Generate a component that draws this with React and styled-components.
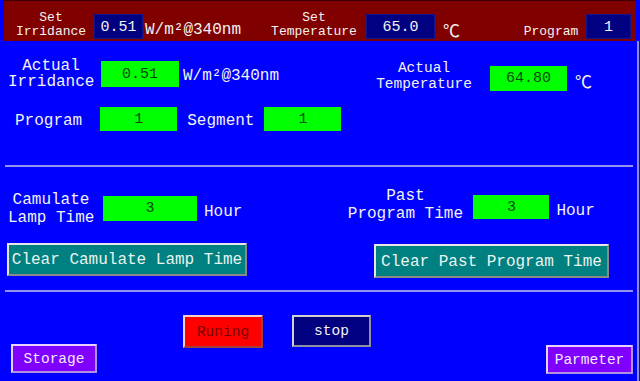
import React from "react";
import styled, { createGlobalStyle } from "styled-components";

const Global = createGlobalStyle`
  html, body { margin: 0; padding: 0; background: #0000ff; }
  * { box-sizing: border-box; }
`;

const FONT = `"Liberation Mono", "DejaVu Sans Mono", "Noto Sans CJK SC", monospace`;

const Screen = styled.div`
  width: 640px;
  height: 381px;
  background: #0000ff;
  overflow: hidden;
  font-family: ${FONT};
  color: #f2f2f2;
  display: flex;
  flex-direction: column;
`;

const TopBar = styled.div`
  margin-left: 4px;
  width: 632px;
  height: 41px;
  flex: none;
  background: #800000;
  border-top: 1px solid #3a0000;
  display: flex;
  align-items: flex-end;
  padding-bottom: 2px;
`;

const Main = styled.div`
  flex: 1;
  width: 639px;
  border-right: 2px solid #8c8ce6;
  display: flex;
  flex-direction: column;
`;

const SetLabel = styled.div`
  margin-left: ${(p) => p.$ml}px;
  width: ${(p) => p.$w}px;
  font-size: 13px;
  line-height: 14px;
  text-align: center;
  white-space: nowrap;
`;

const SetValue = styled.div`
  margin-left: ${(p) => p.$ml}px;
  width: ${(p) => p.$w}px;
  height: 25px;
  background: #000080;
  border: 1px solid #14148c;
  color: #f4f4f4;
  font-size: 15px;
  line-height: 24px;
  padding-top: 1px;
  text-align: center;
`;

const TopUnit = styled.div`
  margin-left: ${(p) => p.$ml}px;
  margin-bottom: -3px;
  font-size: 16px;
  line-height: 24px;
  white-space: nowrap;
`;

const Celsius = styled.div`
  margin-left: ${(p) => p.$ml}px;
  margin-top: ${(p) => p.$mt || 0}px;
  margin-bottom: ${(p) => p.$mb || 0}px;
  font-family: "Noto Sans CJK SC", sans-serif;
  font-size: 17px;
  line-height: ${(p) => p.$lh || 25}px;
  font-weight: 400;
`;

const Row = styled.div`
  display: flex;
  align-items: flex-start;
  margin-top: ${(p) => p.$mt}px;
  flex: none;
`;

const Label = styled.div`
  margin-left: ${(p) => p.$ml}px;
  margin-top: ${(p) => p.$mt || 0}px;
  width: ${(p) => (p.$w ? `${p.$w}px` : "auto")};
  height: ${(p) => (p.$h ? `${p.$h}px` : "auto")};
  overflow: hidden;
  font-size: ${(p) => p.$fs || 16}px;
  line-height: ${(p) => p.$lh}px;
  text-align: center;
  white-space: nowrap;
`;

const GreenBox = styled.div`
  margin-left: ${(p) => p.$ml}px;
  margin-top: ${(p) => p.$mt || 0}px;
  width: ${(p) => p.$w}px;
  height: ${(p) => p.$h}px;
  background: #00ff00;
  color: #0a4a0a;
  font-size: 15px;
  line-height: ${(p) => p.$h - 1}px;
  padding-top: 1px;
  text-align: center;
`;

const Separator = styled.div`
  margin-top: ${(p) => p.$mt}px;
  margin-left: 5px;
  width: 628px;
  height: 2px;
  background: #9494f0;
  flex: none;
`;

const ClearButton = styled.div`
  margin-left: ${(p) => p.$ml}px;
  margin-top: ${(p) => p.$mt || 0}px;
  width: ${(p) => p.$w}px;
  height: ${(p) => p.$h}px;
  background: #008080;
  border: 2px solid;
  border-color: #e6e6e6 #8a8a8a #8a8a8a #e6e6e6;
  color: #eaf4f0;
  font-size: 16px;
  padding-top: 2px;
  line-height: ${(p) => p.$h - 6}px;
  text-align: center;
  white-space: nowrap;
`;

const ActionButton = styled.div`
  margin-left: ${(p) => p.$ml}px;
  margin-top: ${(p) => p.$mt}px;
  width: ${(p) => p.$w}px;
  height: ${(p) => p.$h}px;
  background: ${(p) => p.$bg};
  color: ${(p) => p.$fg};
  border: 2px solid;
  border-color: ${(p) => p.$hi} ${(p) => p.$lo} ${(p) => p.$lo} ${(p) => p.$hi};
  font-size: 14.5px;
  padding-top: 1px;
  line-height: ${(p) => p.$h - 5}px;
  text-align: center;
  white-space: nowrap;
`;

export default function App() {
  return (
    <>
      <Global />
      <Screen>
        <TopBar>
          <SetLabel $ml={5} $w={84}>
            Set
            <br />
            Irridance
          </SetLabel>
          <SetValue $ml={1} $w={49}>0.51</SetValue>
          <TopUnit $ml={2}>W/m²@340nm</TopUnit>
          <SetLabel $ml={23} $w={100}>
            Set
            <br />
            Temperature
          </SetLabel>
          <SetValue $ml={2} $w={69}>65.0</SetValue>
          <Celsius $ml={8} $lh={24} $mb={-3}>℃</Celsius>
          <SetLabel $ml={61} $w={60}>Program</SetLabel>
          <SetValue $ml={5} $w={45}>1</SetValue>
        </TopBar>
        <Main>
          <Row $mt={15}>
            <Label $ml={8} $w={86} $h={32} $mt={2} $lh={16}>
              Actual
              <br />
              Irridance
            </Label>
            <GreenBox $ml={7} $w={78} $h={26} $mt={5}>0.51</GreenBox>
            <Label $ml={4} $mt={7} $lh={26}>W/m²@340nm</Label>
            <Label $ml={90} $w={110} $mt={4} $lh={16} $fs={14.5}>
              Actual
              <br />
              Temperature
            </Label>
            <GreenBox $ml={11} $w={77} $h={25} $mt={10}>64.80</GreenBox>
            <Celsius $ml={8} $mt={12}>℃</Celsius>
          </Row>
          <Row $mt={13}>
            <Label $ml={15} $mt={3} $lh={24}>Program</Label>
            <GreenBox $ml={18} $w={77} $h={24} $mt={1}>1</GreenBox>
            <Label $ml={10} $mt={3} $lh={24}>Segment</Label>
            <GreenBox $ml={10} $w={77} $h={24} $mt={1}>1</GreenBox>
          </Row>
          <Separator $mt={32} />
          <Row $mt={18}>
            <Label $ml={8} $w={86} $h={34} $mt={6} $lh={18}>
              Camulate
              <br />
              Lamp Time
            </Label>
            <GreenBox $ml={9} $w={94} $h={25} $mt={11}>3</GreenBox>
            <Label $ml={7} $mt={15} $lh={25}>Hour</Label>
            <Label $ml={103} $w={120} $mt={2} $lh={18}>
              Past
              <br />
              Program Time
            </Label>
            <GreenBox $ml={8} $w={76} $h={24} $mt={10}>3</GreenBox>
            <Label $ml={7} $mt={14} $lh={24}>Hour</Label>
          </Row>
          <Row $mt={18}>
            <ClearButton $ml={7} $w={240} $h={33}>Clear Camulate Lamp Time</ClearButton>
            <ClearButton $ml={127} $w={235} $h={34} $mt={1}>Clear Past Program Time</ClearButton>
          </Row>
          <Separator $mt={12} />
          <Row $mt={0}>
            <ActionButton $ml={11} $mt={52} $w={86} $h={29} $bg="#8000ff" $fg="#f4e8ff" $hi="#e8d0ff" $lo="#b090e0">
              Storage
            </ActionButton>
            <ActionButton $ml={86} $mt={23} $w={80} $h={33} $bg="#ff0000" $fg="#7a0000" $hi="#f0d0d0" $lo="#a04040">
              Runing
            </ActionButton>
            <ActionButton $ml={29} $mt={23} $w={79} $h={32} $bg="#000080" $fg="#f4f4f4" $hi="#d0d0d0" $lo="#9090a0">
              stop
            </ActionButton>
            <ActionButton $ml={175} $mt={53} $w={87} $h={29} $bg="#8000ff" $fg="#f4e8ff" $hi="#e8d0ff" $lo="#b090e0">
              Parmeter
            </ActionButton>
          </Row>
        </Main>
      </Screen>
    </>
  );
}
